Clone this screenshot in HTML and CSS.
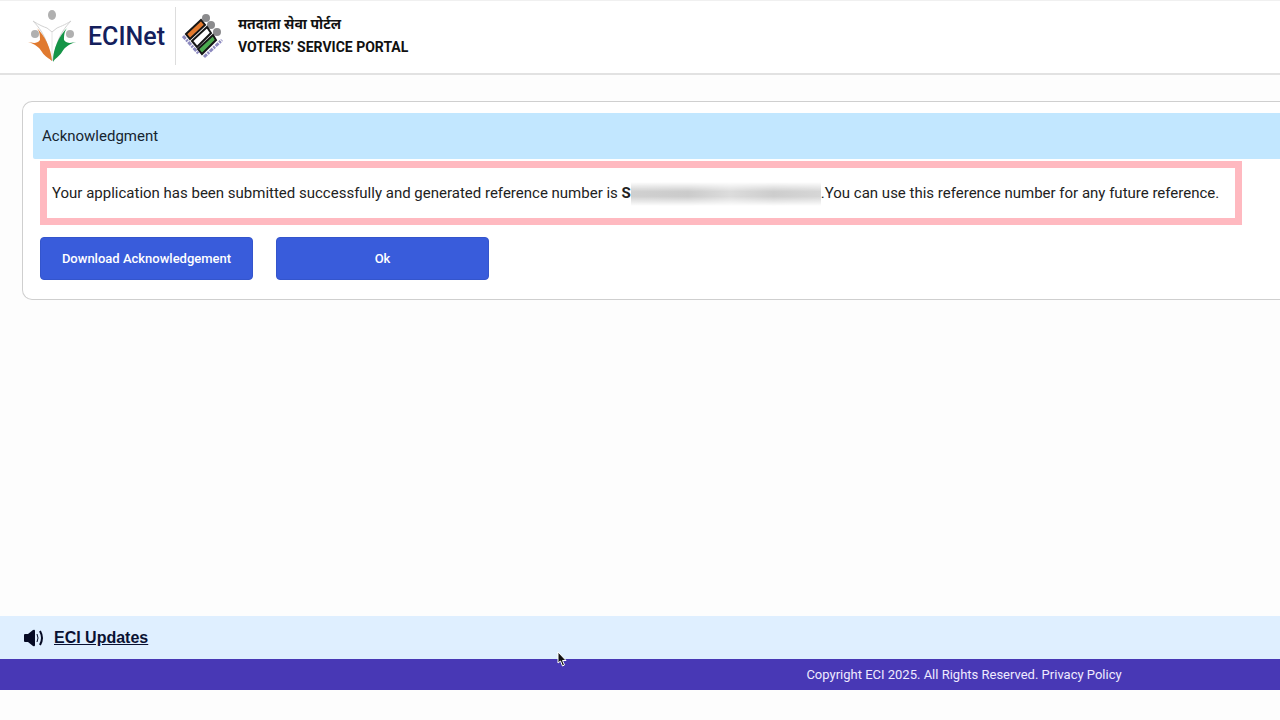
FILE: index.html
```html
<!DOCTYPE html>
<html lang="en">
<head>
    <meta charset="UTF-8">
    <meta name="viewport" content="width=device-width, initial-scale=1.0">
    <title>Voters' Service Portal</title>
    <link rel="stylesheet" href="styles.css">
</head>
<body>
    <div class="page">
        <header class="header">
            <div class="brand">
                <svg class="brand-logo" width="48" height="54" viewBox="0 0 48 54" aria-hidden="true">
                    <path d="M5 12 C11 18 16 26 18 32 C20 38 22 45 24 52 C26 45 28 38 30 32 C32 26 37 18 43 12 C37 16 31 18 29 19 L24 23 L19 19 C16 18 11 16 5 12Z" fill="#fff" stroke="#d2d2d2" stroke-width="1"/>
                    <path d="M24 23 V50" stroke="#e4e4e4" stroke-width="1"/>
                    <path d="M8 18 C12 22 12 27 12 31 C9 35 5 34 0 33 C7 35 11 38 14 43 C17 48 21 49 24 52 C23 39 17 27 8 18Z" fill="#e07a2f"/>
                    <path d="M40 18 C36 22 36 27 36 31 C39 35 43 34 48 33 C41 35 37 38 34 43 C31 48 27 49 25 53 C25 39 31 27 40 18Z" fill="#159447"/>
                    <ellipse cx="24" cy="6" rx="4" ry="5" fill="#b0b0b0"/>
                    <circle cx="7" cy="25" r="4" fill="#b0b0b0"/>
                    <circle cx="42" cy="25" r="4" fill="#b0b0b0"/>
                </svg>
                <span class="brand-name">ECINet</span>
            </div>
            <div class="portal">
                <svg class="portal-logo" width="42" height="46" viewBox="0 0 42 46" aria-hidden="true">
                    <circle cx="24" cy="5" r="4" fill="#8b8b8d"/>
                    <circle cx="29" cy="12" r="4" fill="#8b8b8d"/>
                    <circle cx="35" cy="19" r="4" fill="#8b8b8d"/>
                    <g stroke="#161616" stroke-width="2">
                        <path d="M4 21 L19 7 L23 12 L8 26Z" fill="#e3792d"/>
                        <path d="M10 28 L25 14 L29 20 L15 34Z" fill="#fff"/>
                        <path d="M16 36 L31 22 L34 27 L20 41Z" fill="#4cab50"/>
                    </g>
                    <path d="M1 23 L17 41 M22 44 L40 27" fill="none" stroke="#8d8abf" stroke-width="3" stroke-dasharray="4 1 2 1"/>
                </svg>
                <div class="portal-name">
                    <span lang="hi">मतदाता सेवा पोर्टल</span>
                    <span>VOTERS’ SERVICE PORTAL</span>
                </div>
            </div>
        </header>

        <main class="content">
            <section class="card">
                <h1 class="card-title">Acknowledgment</h1>
                <div class="card-body">
                    <p class="message">Your application has been submitted successfully and generated reference number is <b>S</b><span class="redacted"></span>.You can use this reference number for any future reference.</p>
                    <div class="actions">
                        <button class="btn" type="button">Download Acknowledgement</button>
                        <button class="btn" type="button">Ok</button>
                    </div>
                </div>
            </section>
        </main>

        <footer class="footer">
            <div class="updates">
                <svg width="20" height="18" viewBox="0 0 20 18" aria-hidden="true">
                    <path d="M0 6 Q0 5 1 5 H4 L9 1 Q11 0 11 2 V16 Q11 18 9 17 L4 13 H1 Q0 13 0 12Z" fill="#060b24"/>
                    <path d="M13 5 Q15 9 13 13" fill="none" stroke="#060b24" stroke-width="1"/>
                    <path d="M16 2 Q20 9 16 16" fill="none" stroke="#060b24" stroke-width="2"/>
                </svg>
                <a href="#">ECI Updates</a>
            </div>
            <div class="copyright">Copyright ECI 2025. All Rights Reserved. <a href="#">Privacy Policy</a></div>
        </footer>
    </div>

    <svg class="cursor" width="10" height="16" viewBox="0 0 10 16" aria-hidden="true">
        <path d="M1 1 V12 L3.500 10 L5.500 15 L7.500 14 L5.500 9.500 H9Z" fill="#111" stroke="#fff" stroke-width="1"/>
    </svg>
</body>
</html>
```
FILE: styles.css
```css
* {
    box-sizing: border-box;
}

body {
    margin: 0;
    font-family: Roboto, "Noto Sans", sans-serif;
    font-size: 15px;
    color: #222;
    background-color: #fdfdfd;
}

.page {
    display: flex;
    flex-direction: column;
    min-height: 100vh;
    padding-bottom: 30px;
}

.header {
    display: flex;
    align-items: center;
    padding: 6px 28px 8px;
    border-top: 1px solid #f0f0f0;
    border-bottom: 2px solid #e2e2e2;
    background-color: #fff;
}

.brand {
    display: flex;
    align-items: center;
    gap: 12px;
    height: 58px;
    padding-right: 10px;
    border-right: 1px solid #ddd;
}

.brand-name {
    font-size: 25px;
    font-weight: 500;
    color: #14205c;
}

.portal {
    display: flex;
    align-items: center;
    gap: 14px;
    padding-left: 6px;
}

.portal-name {
    display: flex;
    flex-direction: column;
    font-size: 14px;
    font-weight: 700;
    line-height: 23px;
    color: #111;
}

.content {
    flex: 1;
    padding: 26px 0 26px 22px;
}

/* runs to the right edge of the window */
.card {
    padding: 11px 0 19px 10px;
    border: 1px solid #cfcfcf;
    border-right: none;
    border-radius: 10px 0 0 10px;
    background-color: #fff;
}

.card-title {
    margin: 0;
    padding: 0 9px;
    font-size: 15px;
    font-weight: 400;
    line-height: 46px;
    color: #16242f;
    background-color: #c2e7ff;
    border-radius: 2px 0 0 2px;
}

.card-body {
    padding: 2px 7px 0;
}

.message {
    width: fit-content;
    margin: 0 0 12px;
    padding: 0 16px 0 5px;
    border: 7px solid #ffb9c0;
    line-height: 50px;
}

.redacted {
    display: inline-block;
    width: 190px;
    height: 24px;
    vertical-align: middle;
    background: linear-gradient(90deg, #d0d0d0, #cbcbcb 30%, #dcdcdc 52%, #cdcdcd 75%, #d6d6d6);
    -webkit-mask-image: linear-gradient(transparent, #000 40%, #000 60%, transparent);
    mask-image: linear-gradient(transparent, #000 40%, #000 60%, transparent);
}

.actions {
    display: flex;
    gap: 23px;
}

.btn {
    width: 213px;
    height: 43px;
    padding: 0;
    font-family: inherit;
    font-size: 13px;
    font-weight: 500;
    color: #fff;
    background-color: #395cdb;
    border: 1px solid #3455cc;
    border-radius: 4px;
    cursor: pointer;
}

.updates {
    display: flex;
    align-items: center;
    gap: 10px;
    height: 43px;
    padding: 0 24px;
    background-color: #dfefff;
}

.updates a {
    font-family: "Liberation Sans", Arial, sans-serif;
    font-size: 16px;
    font-weight: 700;
    color: #0a1233;
}

.copyright {
    padding-left: 63%;
    font-size: 13px;
    line-height: 31px;
    color: #efeaff;
    background-color: #4838b5;
}

.copyright a {
    color: inherit;
    text-decoration: none;
}

.cursor {
    position: absolute;
    left: 557px;
    top: 651px;
}
```
